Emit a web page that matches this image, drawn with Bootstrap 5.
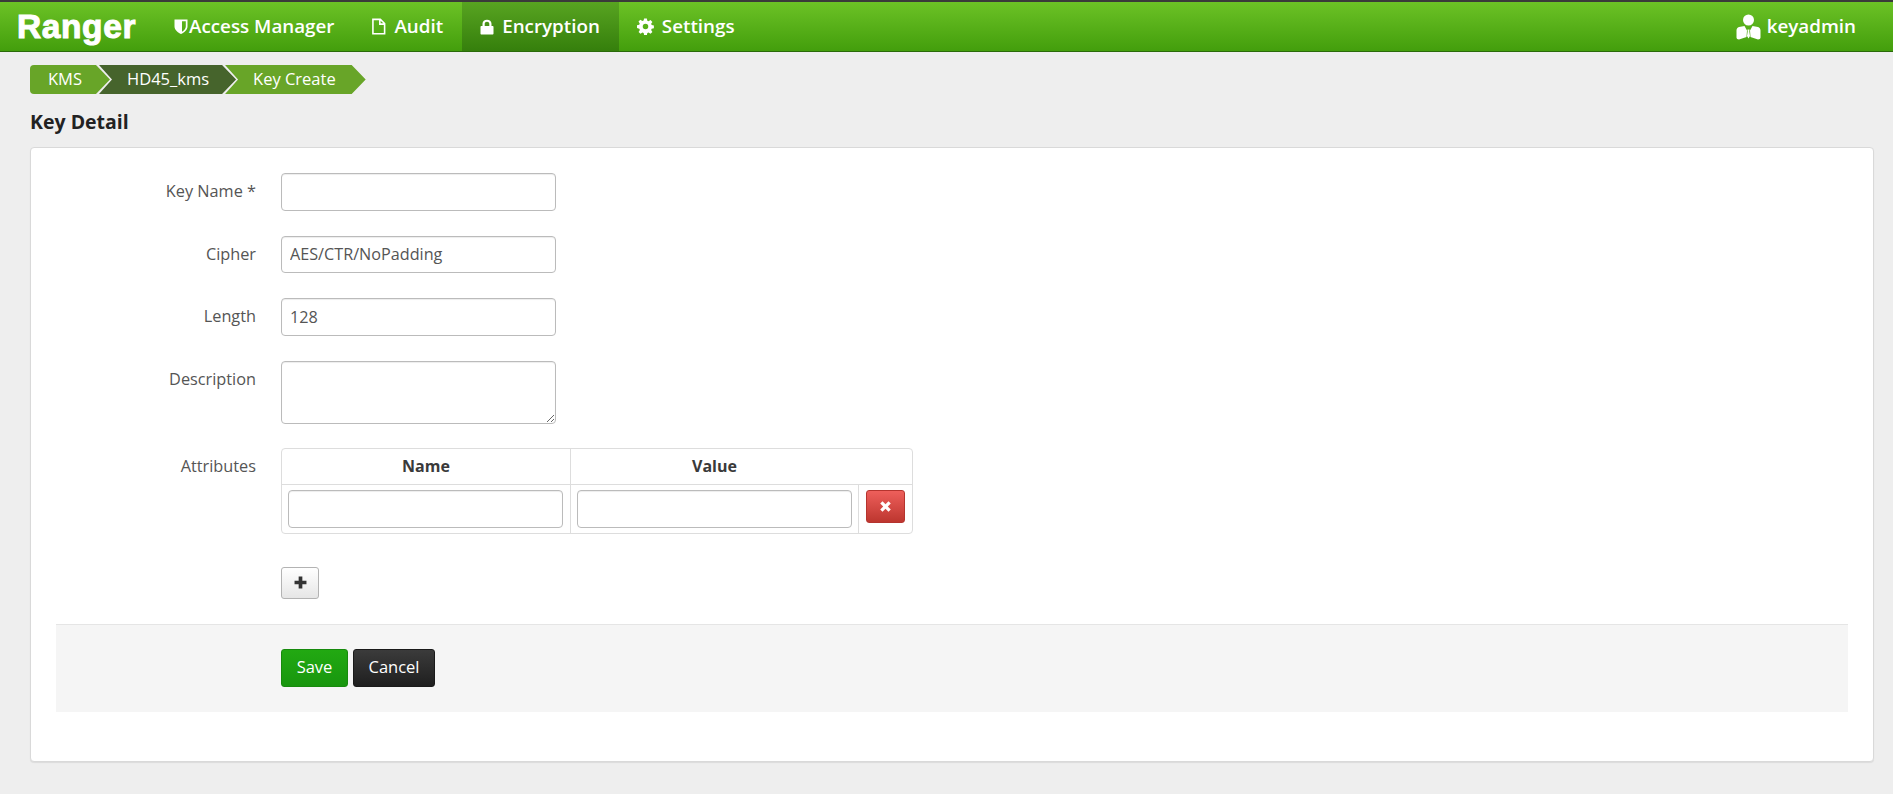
<!DOCTYPE html>
<html lang="en">
<head>
  <meta charset="UTF-8">
  <title>Ranger - Key Create</title>
  <link href="https://cdn.jsdelivr.net/npm/bootstrap@5.3.3/dist/css/bootstrap.min.css" rel="stylesheet">
  <style>
    body {
      background: #eee;
      font-family: "Open Sans", sans-serif;
      font-size: 16px;
      color: #333;
      height: 794px;
    }
    .top-bar {
      height: 52px;
      padding: 0;
      border-top: 2px solid #3a3a3a;
      border-bottom: 1px solid #2a6a0a;
      background: linear-gradient(to bottom, #6cc226, #439e0c);
    }
    .ranger-logo {
      font-family: "Liberation Sans", sans-serif;
      font-weight: 700;
      font-size: 33.5px;
      line-height: 48px;
      color: #fff;
      padding: 0;
      margin: 0 19px 0 17px;
      -webkit-text-stroke: 1px #fff;
      letter-spacing: .6px;
    }
    .top-link {
      display: flex;
      align-items: center;
      height: 49px;
      padding: 0 19px 0 18px;
      color: #fff;
      font-size: 18.8px;
      font-weight: 600;
      text-decoration: none;
    }
    .top-link svg { fill: #fff; flex: none; }
    .top-link.on { background: linear-gradient(to bottom, #58a421, #357f0c); }
    .user-link { padding: 0 37px 0 0; }
    .user-link svg { margin-right: 6px; }
    .crumb-row { margin: 13px 0 0 30px; height: 29px; }
    .crumb-part {
      display: flex;
      align-items: center;
      height: 29px;
      color: #fff;
      font-size: 16.5px;
      background: #68a528;
      padding: 0 30px 0 28px;
      margin-right: -11px;
      clip-path: polygon(0 0, calc(100% - 14px) 0, 100% 50%, calc(100% - 14px) 100%, 0 100%, 13px 50%);
    }
    .crumb-part.first {
      padding-left: 18px;
      padding-right: 28px;
      border-radius: 4px 0 0 4px;
      clip-path: polygon(0 0, calc(100% - 14px) 0, 100% 50%, calc(100% - 14px) 100%, 0 100%);
    }
    .crumb-part.dark { background: #46642c; padding-right: 27px; }
    .page-head {
      font-size: 19.5px;
      font-weight: 700;
      color: #222;
      margin: 15px 0 0 30px;
      height: 38px;
      line-height: 26px;
    }
    .form-panel {
      margin: 0 19px 0 30px;
      height: 615px;
      padding: 25px 25px 0;
      background: #fff;
      border: 1px solid #d9d9d9;
      border-radius: 4px;
      box-shadow: 0 1px 1px rgba(0,0,0,.08);
    }
    .field-row { display: flex; margin-bottom: 25px; }
    .field-row.last-field { margin-bottom: 24px; }
    .field-label {
      width: 200px;
      margin-right: 25px;
      text-align: right;
      padding-top: 8px;
      color: #555;
      font-size: 16.3px;
      line-height: 20px;
      flex: none;
    }
    .field-input {
      width: 275px;
      height: 37.5px;
      padding: 4px 8px;
      color: #555;
      font-size: 16.2px;
      background: #fff;
      border: 1px solid #bbb;
      border-radius: 4px;
      box-shadow: inset 0 1px 1px rgba(0,0,0,.075);
    }
    textarea.field-input { height: 63px; display: block; }
    .attr-table {
      width: 632px;
      height: 86px;
      border: 1px solid #ddd;
      border-radius: 4px;
      border-collapse: separate;
      border-spacing: 0;
      table-layout: fixed;
    }
    .attr-table th {
      height: 36px;
      text-align: center;
      font-size: 16px;
      font-weight: 700;
      color: #3a3a3a;
      border-bottom: 1px solid #ddd;
    }
    .attr-table th:nth-child(2), .attr-table td + td { border-left: 1px solid #ddd; }
    .attr-table td { padding: 5px 6px 5px 6px; vertical-align: top; }
    .attr-table .field-input { width: 275px; height: 38px; display: block; }
    .del-btn, .add-btn, .save-btn, .cancel-btn {
      display: inline-flex;
      align-items: center;
      justify-content: center;
      padding: 0;
      border-radius: 3px;
    }
    .del-btn {
      width: 39px;
      height: 33px;
      margin-left: 1px;
      background: linear-gradient(to bottom, #ee5f5b, #bd362f);
      border: 1px solid #b5342e;
    }
    .add-btn {
      width: 38px;
      height: 32px;
      margin: 33px 0 25px 225px;
      background: linear-gradient(to bottom, #fff, #e6e6e6);
      border: 1px solid #b3b3b3;
      display: flex;
    }
    .form-foot {
      height: 88px;
      padding: 24px 0 0 225px;
      background: #f5f5f5;
      border-top: 1px solid #e5e5e5;
    }
    .save-btn, .cancel-btn { height: 38px; color: #fff; font-size: 16.5px; }
    .save-btn {
      width: 67px;
      margin-right: 5px;
      background: linear-gradient(to bottom, #22a912, #18960e);
      border: 1px solid #178a0d;
    }
    .cancel-btn {
      width: 82px;
      background: linear-gradient(to bottom, #3b3b3b, #1f1f1f);
      border: 1px solid #1a1a1a;
    }
  </style>
</head>
<body>
  <nav class="navbar top-bar justify-content-start flex-nowrap">
    <a class="ranger-logo text-decoration-none" href="#">Ranger</a>
    <a class="top-link" href="#">
      <svg width="16" height="17" viewBox="0 0 16 17"><path d="M1.500 1.500h13v7c0 3.500-3.500 6-6.500 7.500-3-1.500-6.500-4-6.500-7.500zM9 3.200v10.500c2-1.200 3.800-3 3.800-5.200V3.200z" fill-rule="evenodd"/></svg>Access Manager
    </a>
    <a class="top-link" href="#">
      <svg class="me-2" width="15" height="17" viewBox="0 0 14 16"><path d="M1 .5h8l4.500 4.500v10.500H1zM2.500 2v12h9.500V6.500H7.500V2zM9 2.500V5h2.500z" fill-rule="evenodd"/></svg>Audit
    </a>
    <a class="top-link on" href="#">
      <svg class="me-2" width="14" height="16" viewBox="0 0 14 16"><path d="M1.500 7h1V4.800C2.500 2.300 4.500.8 7 .8s4.500 1.500 4.500 4V7h1c.6 0 1 .4 1 1v6.500c0 .6-.4 1-1 1h-11c-.6 0-1-.4-1-1V8c0-.6.4-1 1-1zM4.700 7h4.600V4.800C9.300 3.500 8.300 2.800 7 2.800s-2.300.7-2.300 2z" fill-rule="evenodd"/></svg>Encryption
    </a>
    <a class="top-link" href="#">
      <svg class="me-2" width="17" height="17" viewBox="0 0 16 16"><path d="M6.700.5h2.600l.4 2.100 1.200.5 1.800-1.200 1.800 1.800-1.200 1.800.5 1.200 2.100.4v2.600l-2.100.4-.5 1.200 1.200 1.800-1.800 1.800-1.800-1.200-1.200.5-.4 2.100H6.700l-.4-2.100-1.200-.5-1.800 1.200-1.800-1.800 1.200-1.800-.5-1.200L0 9.400V6.800l2.100-.4.500-1.200-1.200-1.800 1.800-1.800 1.800 1.200 1.200-.5zM8 5.500a2.600 2.600 0 1 0 0 5.200 2.600 2.600 0 0 0 0-5.200z" fill-rule="evenodd"/></svg>Settings
    </a>
    <a class="top-link user-link ms-auto" href="#">
      <svg width="25" height="26" viewBox="0 0 25 26"><circle cx="12.500" cy="6" r="5.500"/><path d="M8.500 12L11 16.500 10.500 23 3 25.500c-1.500 0-2.500-.7-2.500-2v-7c0-1.800 1-3 2.500-3.500zM16.500 12L14 16.500l.5 6.500 7.500 2.500c1.500 0 2.500-.7 2.500-2v-7c0-1.800-1-3-2.500-3.500zM11.500 15.500h2l-.2 2 .7 4.500-1.500 2.500-1.500-2.500.7-4.500z"/></svg>keyadmin
    </a>
  </nav>

  <div class="crumb-row d-flex">
    <div class="crumb-part first">KMS</div>
    <div class="crumb-part dark">HD45_kms</div>
    <div class="crumb-part">Key Create</div>
  </div>

  <div class="page-head">Key Detail</div>

  <div class="form-panel">
    <div class="field-row">
      <label class="field-label">Key Name *</label>
      <input class="field-input" type="text">
    </div>
    <div class="field-row">
      <label class="field-label">Cipher</label>
      <input class="field-input" type="text" value="AES/CTR/NoPadding">
    </div>
    <div class="field-row">
      <label class="field-label">Length</label>
      <input class="field-input" type="text" value="128">
    </div>
    <div class="field-row last-field">
      <label class="field-label">Description</label>
      <textarea class="field-input"></textarea>
    </div>
    <div class="d-flex">
      <label class="field-label">Attributes</label>
      <table class="attr-table">
        <colgroup><col style="width:288px"><col style="width:288px"><col></colgroup>
        <thead><tr><th>Name</th><th>Value</th><th></th></tr></thead>
        <tbody>
          <tr>
            <td><input class="field-input" type="text"></td>
            <td><input class="field-input" type="text"></td>
            <td>
              <button class="del-btn" type="button" aria-label="Remove">
                <svg width="11" height="11" viewBox="0 0 10 10"><path d="M2.300.2L5 2.900 7.700.2l2.100 2.100L7.100 5l2.700 2.700-2.100 2.100L5 7.100 2.300 9.800.2 7.700 2.900 5 .2 2.300z" fill="#fff"/></svg>
              </button>
            </td>
          </tr>
        </tbody>
      </table>
    </div>
    <button class="add-btn" type="button" aria-label="Add">
      <svg width="13" height="13" viewBox="0 0 12 12"><path d="M4.300 .5h3.400v3.800h3.800v3.400H7.700v3.800H4.300V7.700H.5V4.300h3.800z" fill="#333"/></svg>
    </button>
    <div class="form-foot">
      <button class="save-btn" type="button">Save</button><button class="cancel-btn" type="button">Cancel</button>
    </div>
  </div>

  <script src="https://cdn.jsdelivr.net/npm/bootstrap@5.3.3/dist/js/bootstrap.bundle.min.js"></script>
</body>
</html>
